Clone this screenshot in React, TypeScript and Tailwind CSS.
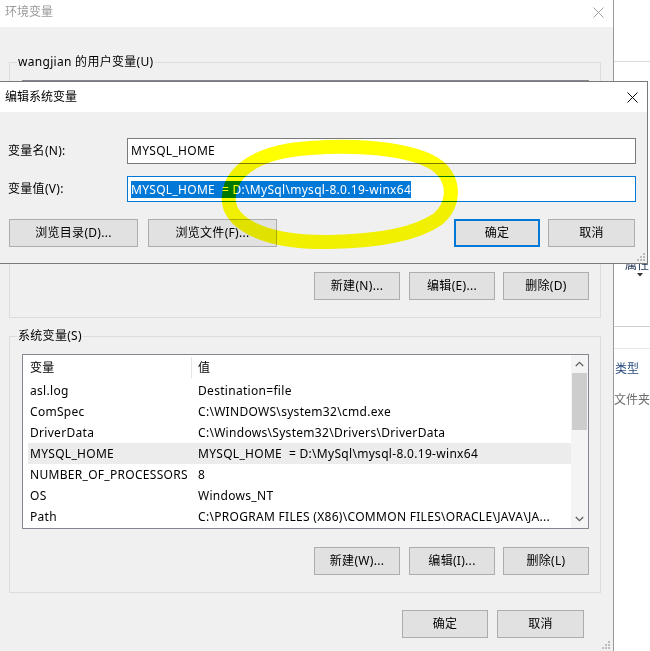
import React from "react";

function XIcon({ color }: { color: string }) {
  return (
    <svg width="11" height="11" viewBox="0 0 11 11" className="block">
      <path d="M0.5 0.5 L10.5 10.5 M10.5 0.5 L0.5 10.5" stroke={color} strokeWidth="1" fill="none" />
    </svg>
  );
}

function Grip() {
  return (
    <svg width="10" height="10" viewBox="0 0 10 10" className="block">
      <rect x="7" y="1" width="2" height="2" fill="#bcbcbc" />
      <rect x="4" y="4" width="2" height="2" fill="#bcbcbc" />
      <rect x="7" y="4" width="2" height="2" fill="#bcbcbc" />
      <rect x="1" y="7" width="2" height="2" fill="#bcbcbc" />
      <rect x="4" y="7" width="2" height="2" fill="#bcbcbc" />
      <rect x="7" y="7" width="2" height="2" fill="#bcbcbc" />
    </svg>
  );
}

function Btn({ children, className }: { children: React.ReactNode; className: string }) {
  return (
    <div
      className={
        "h-[28px] flex items-center justify-center bg-[#e1e1e1] border border-[#adadad] leading-[16px] " +
        className
      }
    >
      {children}
    </div>
  );
}

const rows: [string, string][] = [
  ["asl.log", "Destination=file"],
  ["ComSpec", "C:\\WINDOWS\\system32\\cmd.exe"],
  ["DriverData", "C:\\Windows\\System32\\Drivers\\DriverData"],
  ["MYSQL_HOME", "MYSQL_HOME  = D:\\MySql\\mysql-8.0.19-winx64"],
  ["NUMBER_OF_PROCESSORS", "8"],
  ["OS", "Windows_NT"],
  ["Path", "C:\\PROGRAM FILES (X86)\\COMMON FILES\\ORACLE\\JAVA\\JA..."],
];

export default function App() {
  return (
    <div className="relative w-[650px] h-[651px] overflow-hidden bg-white flex text-[12px] tracking-[0.3px] text-black [font-family:'Segoe_UI','Noto_Sans','Noto_Sans_CJK_SC',sans-serif]">
      {/* Environment variables window */}
      <div className="w-[614px] shrink-0 h-[651px] bg-[#f0f0f0] border-r border-[#9a9a9a] flex flex-col relative">
        <div className="h-[27px] bg-white flex items-start justify-between">
          <span className="pl-[5px] pt-[3px] leading-[18px] tracking-normal text-[#9a9a9a]">环境变量</span>
          <div className="mt-[7px] mr-[9px]">
            <XIcon color="#a0a0a0" />
          </div>
        </div>
        <div className="pl-[9px] pr-[12px] pt-[35px] flex flex-col">
          {/* user variables */}
          <div className="relative border border-[#dcdcdc] pt-[17px] pl-[12px] pr-[11px] pb-[17px]">
            <span className="absolute -top-[9px] left-[7px] px-[1px] leading-[16px] bg-[#f0f0f0]">
              wangjian 的用户变量(U)
            </span>
            <div className="h-[175px] border border-[#828790] bg-white" />
            <div className="mt-[17px] flex justify-end">
              <Btn className="w-[86px]">新建(N)...</Btn>
              <Btn className="w-[86px] ml-[9px]">编辑(E)...</Btn>
              <Btn className="w-[86px] ml-[8px]">删除(D)</Btn>
            </div>
          </div>
          {/* system variables */}
          <div className="relative mt-[18px] border border-[#dcdcdc] pt-[17px] pl-[12px] pr-[11px] pb-[17px]">
            <span className="absolute -top-[9px] left-[7px] px-[1px] leading-[16px] bg-[#f0f0f0]">
              系统变量(S)
            </span>
            <div className="h-[175px] border border-[#828790] bg-white flex">
              <div className="flex-1 flex flex-col">
                <div className="h-[25px] flex items-stretch">
                  <div className="w-[168px] pl-[7px] flex items-center">变量</div>
                  <div className="w-px my-[2px] bg-[#e5e5e5]" />
                  <div className="flex-1 pl-[6px] flex items-center">值</div>
                </div>
                {rows.map(([k, v]) => (
                  <div
                    key={k}
                    className={
                      "h-[21px] ml-[5px] flex items-center whitespace-pre " +
                      (k === "MYSQL_HOME" ? "bg-[#ececec]" : "")
                    }
                  >
                    <div className="w-[168px] pl-[2px] overflow-hidden">{k}</div>
                    <div className="flex-1 pl-[2px] overflow-hidden">{v}</div>
                  </div>
                ))}
              </div>
              {/* scrollbar */}
              <div className="w-[17px] bg-[#f4f4f4] flex flex-col items-center">
                <div className="h-[18px] w-full flex items-center justify-center">
                  <svg width="9" height="6" viewBox="0 0 9 6" className="block">
                    <path d="M0.8 5 L4.5 1.3 L8.2 5" stroke="#606060" strokeWidth="1.3" fill="none" />
                  </svg>
                </div>
                <div className="w-[15px] h-[57px] bg-[#cdcdcd]" />
                <div className="flex-1" />
                <div className="h-[18px] w-full flex items-center justify-center">
                  <svg width="9" height="6" viewBox="0 0 9 6" className="block">
                    <path d="M0.8 1 L4.5 4.7 L8.2 1" stroke="#606060" strokeWidth="1.3" fill="none" />
                  </svg>
                </div>
              </div>
            </div>
            <div className="mt-[18px] flex justify-end">
              <Btn className="w-[86px]">新建(W)...</Btn>
              <Btn className="w-[86px] ml-[9px]">编辑(I)...</Btn>
              <Btn className="w-[86px] ml-[8px]">删除(L)</Btn>
            </div>
          </div>
          <div className="mt-[17px] pr-[17px] flex justify-end">
            <Btn className="w-[86px]">确定</Btn>
            <Btn className="w-[87px] ml-[9px]">取消</Btn>
          </div>
        </div>
        <div className="absolute right-[2px] bottom-[1px]">
          <Grip />
        </div>
      </div>

      {/* explorer window behind, right strip */}
      <div className="flex-1 flex flex-col bg-white tracking-normal">
        <div className="h-[61px]" />
        <div className="h-px bg-[#dadada]" />
        <div className="h-[195px]" />
        <div className="h-[16px] pl-[11px] leading-[16px] whitespace-nowrap text-[#1e2f55]">属性</div>
        <div className="h-[5px] pl-[23px]">
          <svg width="6" height="4" viewBox="0 0 6 4" className="block">
            <path d="M0 0 L6 0 L3 3.5 Z" fill="#333" />
          </svg>
        </div>
        <div className="h-[48px]" />
        <div className="h-px bg-[#cfcfcf]" />
        <div className="h-[21px]" />
        <div className="h-px bg-[#e8e8e8]" />
        <div className="h-[12px]" />
        <div className="h-[16px] pl-[1px] leading-[16px] whitespace-nowrap text-[#2b4a7c]">类型</div>
        <div className="h-[15px]" />
        <div className="h-[16px] leading-[16px] whitespace-nowrap text-[#6d6d6d]">文件夹</div>
      </div>

      {/* Edit system variable dialog */}
      <div className="absolute left-[-1px] top-[81px] w-[649px] h-[183px] border border-[#7a7a7a] bg-[#f0f0f0] flex flex-col">
        <div className="h-[30px] bg-white flex items-center justify-between">
          <span className="pl-[5px] leading-[16px] tracking-normal">编辑系统变量</span>
          <div className="mr-[9px]">
            <XIcon color="#000" />
          </div>
        </div>
        <div className="pt-[26px] pr-[11px] flex flex-col">
          <div className="h-[26px] flex items-center">
            <div className="w-[127px] pl-[8px]">变量名(N):</div>
            <div className="flex-1 h-[26px] border border-[#7a7a7a] bg-white flex items-center pl-[3px]">
              MYSQL_HOME
            </div>
          </div>
          <div className="mt-[12px] h-[26px] flex items-center">
            <div className="w-[127px] pl-[8px]">变量值(V):</div>
            <div className="flex-1 h-[26px] border border-[#0078d7] bg-white flex items-center pl-[3px]">
              <span className="bg-[#0078d7] text-white leading-[17px] whitespace-pre">
                MYSQL_HOME  = D:\MySql\mysql-8.0.19-winx64
              </span>
            </div>
          </div>
          <div className="mt-[17px] flex">
            <Btn className="w-[129px] ml-[9px]">浏览目录(D)...</Btn>
            <Btn className="w-[129px] ml-[10px]">浏览文件(F)...</Btn>
            <div className="flex-1" />
            <div className="w-[86px] h-[28px] flex items-center justify-center bg-[#e1e1e1] border-2 border-[#0078d7] leading-[16px]">
              确定
            </div>
            <Btn className="w-[87px] ml-[8px] mr-[1px]">取消</Btn>
          </div>
        </div>
        <div className="absolute right-[1px] bottom-[1px]">
          <Grip />
        </div>
      </div>

      {/* yellow highlighter annotation */}
      <svg
        className="absolute left-0 top-0 pointer-events-none mix-blend-multiply"
        width="650"
        height="651"
        viewBox="0 0 650 651"
      >
        <path
          d="M330 242 C262 243, 225 222, 229 195 C232 168, 262 151, 310 148 C365 144, 418 150, 439 167 C455 181, 455 204, 438 219 C418 233, 385 241, 330 242 Z"
          stroke="#ffff00"
          strokeWidth="14"
          strokeLinejoin="round"
          fill="none"
        />
      </svg>
    </div>
  );
}
